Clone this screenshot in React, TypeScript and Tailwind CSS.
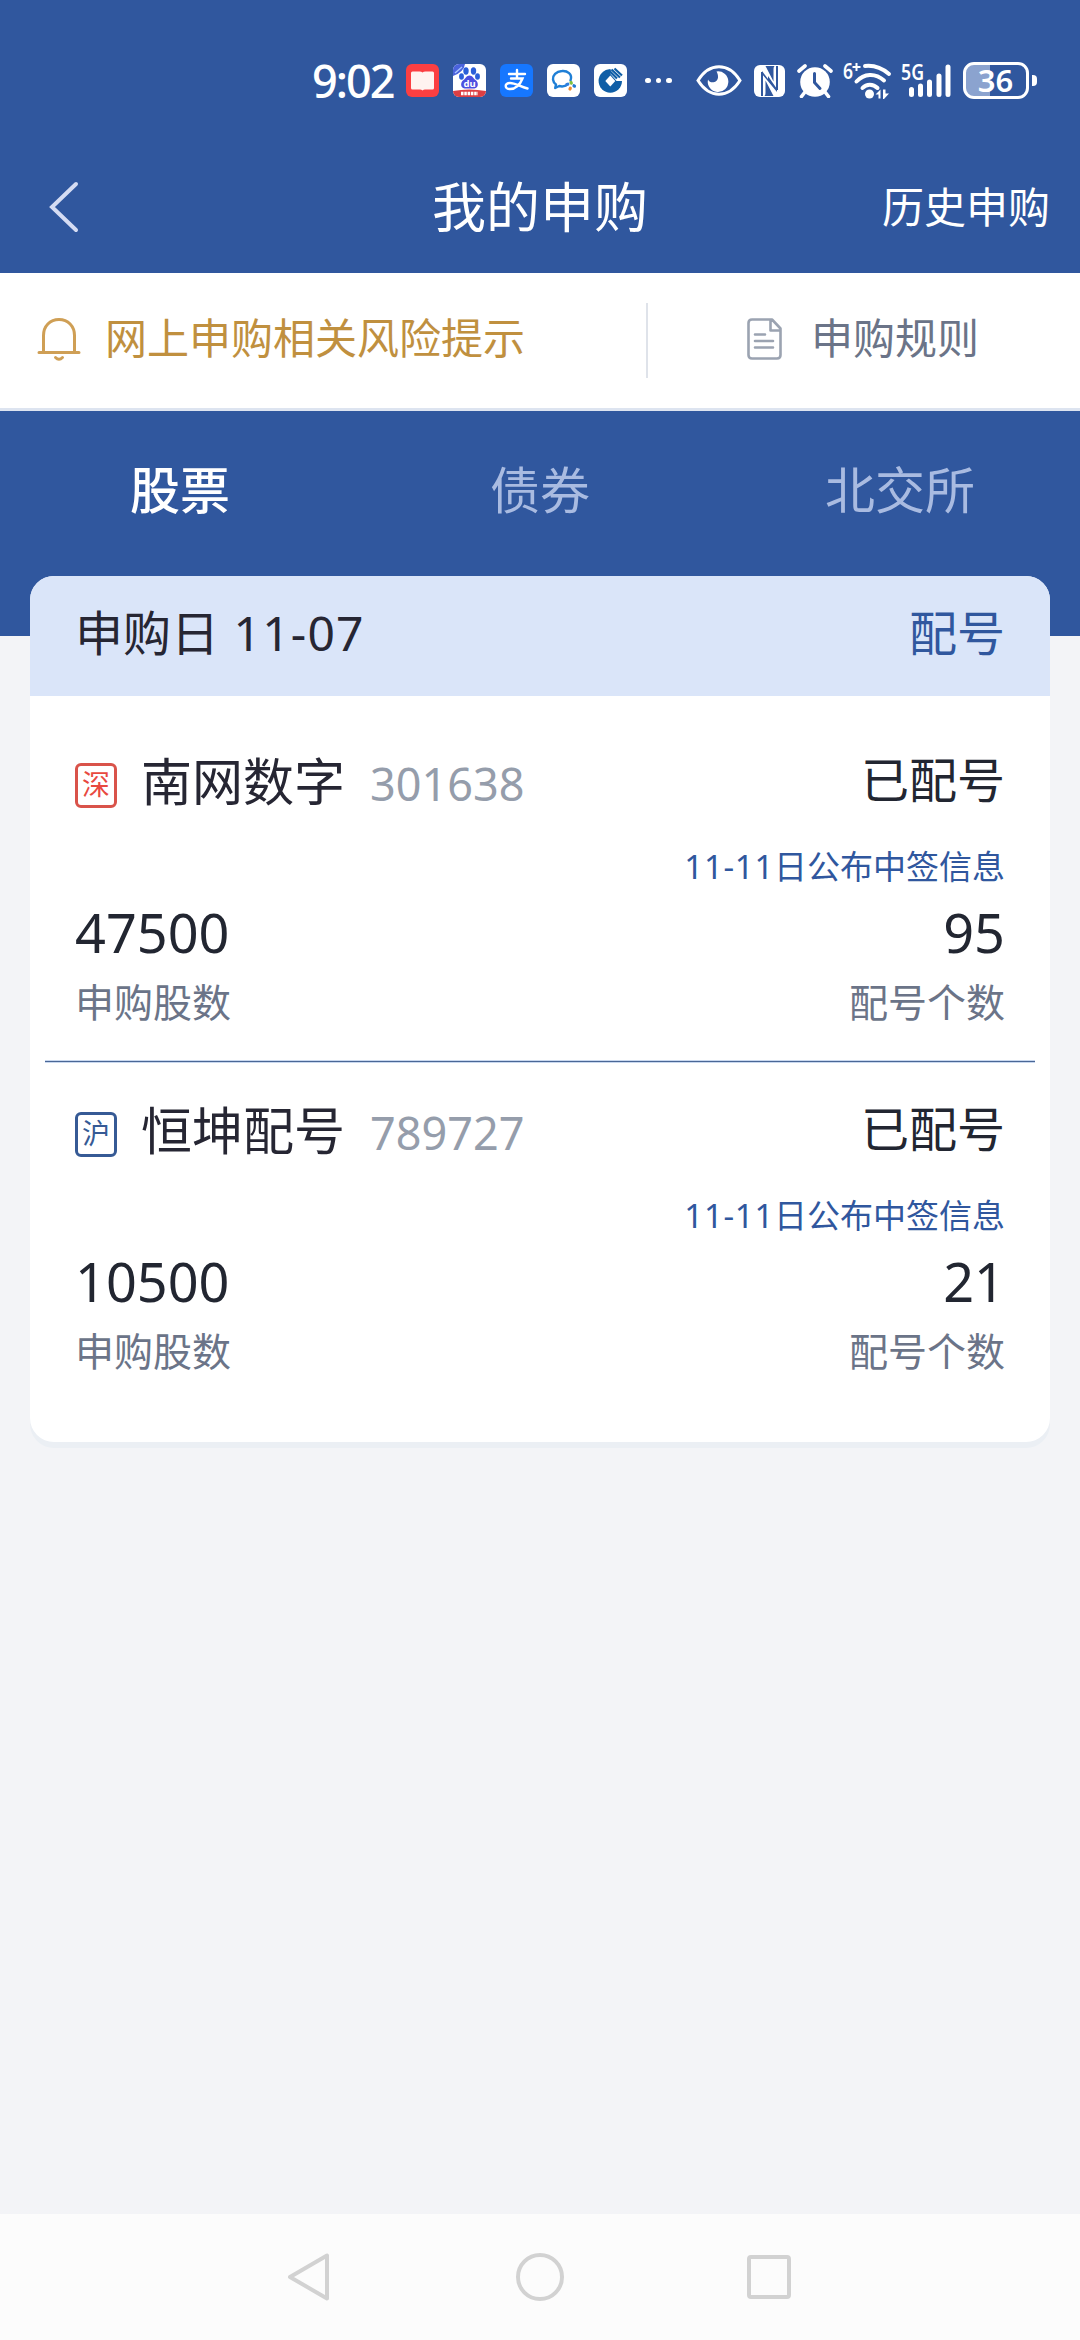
import { useState } from 'react';
import clsx from 'clsx';

type Subscription = {
  market: string;
  name: string;
  code: string;
  shares: string;
  count: string;
  status: string;
  drawDate: string;
};

const tabs = [
  { id: 'stock', label: '股票' },
  { id: 'bond', label: '债券' },
  { id: 'bse', label: '北交所' },
] as const;

const subscriptions: Subscription[] = [
  {
    market: '深',
    name: '南网数字',
    code: '301638',
    shares: '47500',
    count: '95',
    status: '已配号',
    drawDate: '11-11',
  },
  {
    market: '沪',
    name: '恒坤配号',
    code: '789727',
    shares: '10500',
    count: '21',
    status: '已配号',
    drawDate: '11-11',
  },
];

function AppIcons() {
  return (
    <div className="flex gap-[14px]">
      {/* Reader */}
      <svg width="33" height="33" viewBox="0 0 33 33">
        <rect width="33" height="33" rx="6" fill="#fb3f42" />
        <path d="M5 9q0-1.500 1.500-1.500h7q2 0 3 1 1-1 3-1h7q1.500 0 1.500 1.500v15q0 1.500-1.500 1.500h-7.500q-1.500 0-2.500 1-1-1-2.500-1H6.500Q5 25.500 5 24z" fill="#fff3f0" />
      </svg>
      {/* Baidu */}
      <svg width="33" height="33" viewBox="0 0 33 33">
        <defs>
          <clipPath id="baidu">
            <rect width="33" height="33" rx="6" />
          </clipPath>
        </defs>
        <g clipPath="url(#baidu)">
          <rect width="33" height="33" fill="#fff" />
          <path d="M0 0h12q-1 8-12 12z" fill="#4a63dc" />
          <path d="M2 9l7-6" stroke="#a9c4ff" strokeWidth="1.500" />
          <ellipse cx="13" cy="7" rx="2.700" ry="3.700" fill="#2b5fd9" />
          <ellipse cx="20.500" cy="7" rx="2.700" ry="3.700" fill="#2b5fd9" />
          <ellipse cx="8.500" cy="12.500" rx="2.400" ry="3.200" fill="#2b5fd9" />
          <ellipse cx="24.500" cy="12.500" rx="2.400" ry="3.200" fill="#2b5fd9" />
          <path d="M16.500 11.500c3 0 4 3 6 4.500 3.500 2.500 3 8-1 8.500H11.500c-4-.5-4.500-6-1-8.500 2-1.500 3-4.500 6-4.500z" fill="#4d4fe0" />
          <path d="M0 27q16-3 33 0v6H0z" fill="#dc3f43" />
          <text x="16.500" y="22.500" fontSize="9.500" fontWeight="700" fill="#fff" textAnchor="middle">du</text>
          <path d="M8 29.500h17" stroke="#fff" strokeWidth="3.500" strokeDasharray="2.500 .8" />
        </g>
      </svg>
      {/* Alipay */}
      <svg width="33" height="33" viewBox="0 0 33 33">
        <rect width="33" height="33" rx="6" fill="#1677ff" />
        <g fill="none" stroke="#fff" strokeWidth="2.400" strokeLinecap="round">
          <path d="M9 10h16M17 6v8.500M11 14.500h11.500c-2 5-6 10.500-12.500 10.500-5.500 0-6-6 0-6 5.500 0 9.500 3.500 17.500 5.500" />
        </g>
      </svg>
      {/* WeCom */}
      <svg width="33" height="33" viewBox="0 0 33 33">
        <rect width="33" height="33" rx="6" fill="#fff" />
        <path d="M23.500 16.500C26 10 20 6.500 15 7 9 7.300 5.500 11.500 6 15.500c.3 2.500 1.500 4 3 5l-.8 3.500 4-2c2 .6 4.500.5 6.500-.3" fill="none" stroke="#1f7fd6" strokeWidth="2.400" strokeLinecap="round" strokeLinejoin="round" />
        <g strokeWidth="3.200" strokeLinecap="round">
          <path d="M19.800 20.500l1-.3" stroke="#2f7fe0" />
          <path d="M24 18.500l.3.700" stroke="#7fc241" />
          <path d="M27 21.800l.5.300" stroke="#2479d0" />
          <path d="M23 25l.3-.8" stroke="#f08a2b" />
        </g>
      </svg>
      {/* China Construction Bank */}
      <svg width="33" height="33" viewBox="0 0 33 33">
        <rect width="33" height="33" rx="6" fill="#fff" />
        <circle cx="16.300" cy="17" r="11.700" fill="#0f5ea6" />
        <path d="M17 2h14v15h-8.500l-6-7z" fill="#fff" />
        <path d="M14.500 6L23 14.500M17.500 5.500l8.500 8M20.500 4.500l7.500 7" stroke="#0f5ea6" strokeWidth="2.200" />
        <path d="M16.300 11.500l5 5.500-5 5.500-5-5.500z" fill="#fff" />
      </svg>
    </div>
  );
}

function SystemIcons() {
  return (
    <div className="flex items-center text-white">
      {/* Eye comfort */}
      <svg width="46" height="31" viewBox="0 0 46 31" className="mr-[12px]">
        <path d="M2 15.500C8 6 15 1.800 23 1.800S38 6 44 15.500C38 25 31 29.200 23 29.200S8 25 2 15.500z" fill="none" stroke="currentColor" strokeWidth="3" />
        <path d="M20.500 6.500a10.300 10.300 0 1 1-8.500 8c2 4.500 9.500 3.500 10-2 .2-2.500-.5-4.500-1.500-6z" fill="currentColor" />
      </svg>
      {/* NFC */}
      <svg width="31" height="32" viewBox="0 0 31 32" className="mr-[12px]">
        <rect width="31" height="32" rx="6" fill="currentColor" />
        <path d="M8 31V7M23 1v24" stroke="#30579e" strokeWidth="2" />
        <path d="M8 6l6 8v-3l9 13v3L8 9zM11.500 15.500v12.500q0 2-1 3h9zM19.500 16.500V4q0-2 1-3h-9z" fill="#30579e" />
      </svg>
      {/* Alarm */}
      <svg width="36" height="34" viewBox="0 0 36 34" className="mr-[10px]">
        <circle cx="18" cy="18" r="14.800" fill="currentColor" />
        <path d="M2 7L8 2M34 7L28 2M8 28l-3.500 4.500M28 28l3.500 4.500" stroke="currentColor" strokeWidth="3.600" strokeLinecap="round" />
        <path d="M17.500 9.500v9l5.500 6" fill="none" stroke="#30579e" strokeWidth="3" strokeLinecap="round" />
      </svg>
      {/* Wi-Fi 6+ */}
      <svg width="49" height="38" viewBox="0 0 49 38" className="mr-[9px] overflow-visible">
        <text x="0" y="16.500" fontSize="22" fontWeight="600" fill="currentColor" textLength="10" lengthAdjust="spacingAndGlyphs">6</text>
        <path d="M13.500 1v8M9.500 5h8" stroke="currentColor" strokeWidth="2" />
        <g fill="none" stroke="currentColor" strokeWidth="4" strokeLinecap="round">
          <path d="M22 4c9-1 17 2 24 8" />
          <path d="M13.500 19.500c7.500-8 18.500-9 27.500-1" />
          <path d="M19.500 26c4-4.500 10.500-4.500 15 0" />
        </g>
        <circle cx="26.500" cy="32" r="4.500" fill="currentColor" />
        <path d="M32.500 32.500l5-5v9h-2v-4zM40 27.500h2.500v4H46l-5 5.500h-1z" fill="currentColor" />
      </svg>
      {/* 5G signal */}
      <svg width="50" height="37" viewBox="0 0 50 37" className="mr-[12px] overflow-visible">
        <text x="0" y="17.500" fontSize="22" fontWeight="600" fill="currentColor" textLength="23" lengthAdjust="spacingAndGlyphs">5G</text>
        <path d="M10.500 27.500v5M19.500 24v8.500M28.500 20v12.500M38 14v18.500M47 5v27.500" stroke="currentColor" strokeWidth="5" strokeLinecap="round" />
      </svg>
      {/* Battery */}
      <div className="flex h-[37px] w-[66px] items-center justify-center rounded-[11px] border-[3px] border-white bg-linear-to-r from-[#8ba3cf] from-40% to-transparent to-40%">
        <span className="text-[31px] leading-none font-semibold">36</span>
      </div>
      <div className="ml-[3px] h-[11px] w-[5px] rounded-r-[4px] bg-white" />
    </div>
  );
}

function StatusBar() {
  return (
    <div className="flex h-[141px] items-center pt-[20px] pl-[312px]">
      <span className="w-[94px] text-[45px] leading-none font-medium tracking-[-2px] text-white">9:02</span>
      <AppIcons />
      <div className="mr-[24px] ml-[18px] flex gap-[5px]">
        <i className="size-[5.500px] rounded-full bg-white" />
        <i className="size-[5.500px] rounded-full bg-white" />
        <i className="size-[5.500px] rounded-full bg-white" />
      </div>
      <SystemIcons />
    </div>
  );
}

function MarketBadge({ market }: { market: string }) {
  return (
    <span
      className={clsx(
        'mt-[9px] flex h-[45px] w-[42px] justify-center rounded-[6px] border-[3px] text-[28px] leading-[36px]',
        market === '深' ? 'border-[#d9534a] text-[#e8493f]' : 'border-[#365a95] text-[#365a95]'
      )}
    >
      {market}
    </span>
  );
}

function SubscriptionItem({ item }: { item: Subscription }) {
  return (
    <div className="h-[349px] px-[45px] pt-[37px] text-[#222631]">
      <div className="flex h-[66px] items-center">
        <MarketBadge market={item.market} />
        <span className="ml-[24px] text-[51px] leading-[66px] text-[#262633]">{item.name}</span>
        <span className="mt-[5px] ml-[25px] text-[45px] leading-[66px] text-[#959dab]">{item.code}</span>
        <span className="-mt-[2px] ml-auto text-[48px] leading-[66px]">{item.status}</span>
      </div>
      <div className="mt-[31px] text-right text-[33px] leading-[44px] text-[#30579e]">
        <span className="tracking-[0.7px]">{item.drawDate}</span>
        日公布中签信息
      </div>
      <div className="-mt-[1px] flex justify-between text-[54px] leading-[88px]">
        <span>{item.shares}</span>
        <span>{item.count}</span>
      </div>
      <div className="flex justify-between text-[39px] leading-[52px] text-[#6b7488]">
        <span>申购股数</span>
        <span>配号个数</span>
      </div>
    </div>
  );
}

export default function App() {
  const [activeTab, setActiveTab] = useState<'stock' | 'bond' | 'bse'>('stock');

  return (
    <div className="flex h-[2340px] w-[1080px] flex-col overflow-hidden bg-[#f3f4f7] font-['Noto_Sans','Noto_Sans_CJK_SC',sans-serif]">
      {/* Header */}
      <header className="h-[273px] bg-[#30579e] text-white">
        <StatusBar />
        <div className="grid h-[132px] grid-cols-3 items-center pr-[30px] pl-[48px]">
          <svg width="32" height="54" viewBox="0 0 32 54" fill="none" stroke="#d5dcf3" strokeWidth="4" strokeLinecap="round">
            <path d="M28 4L4 27l24 23" />
          </svg>
          <h1 className="-ml-[18px] text-center text-[54px] leading-none">我的申购</h1>
          <span className="text-right text-[42px] leading-none">历史申购</span>
        </div>
      </header>

      {/* Notice */}
      <div className="flex h-[138px] items-center border-b-[3px] border-[#dde4f0] bg-white text-[42px] leading-none">
        <div className="flex w-[646px] items-center pb-[4px] pl-[37px] text-[#c0903f]">
          <svg width="44" height="44" viewBox="0 0 44 44" fill="none" stroke="#cf9f55" strokeWidth="3" strokeLinecap="round">
            <path d="M2 35.500h40M6.500 35V18.500C6.500 9 13 2.500 22 2.500S37.500 9 37.500 18.500V35M18.500 40.500q3.500 3.500 7 0" />
          </svg>
          <span className="mb-[2px] ml-[24px]">网上申购相关风险提示</span>
        </div>
        <div className="h-[75px] w-[2px] bg-[#dfe3ea]" />
        <div className="flex items-center pb-[4px] pl-[99px] text-[#6b7488]">
          <svg width="35" height="42" viewBox="0 0 35 42" fill="none" stroke="#9ba3b1" strokeWidth="2.600" strokeLinecap="round" strokeLinejoin="round">
            <path d="M5 1.500h20l8.500 9V37q0 3.500-3.500 3.500H5Q1.500 40.500 1.500 37V5Q1.500 1.500 5 1.500zM23.500 2v10.500h9.500M8 16.500h10M8 23h18M8 29.500h18" />
          </svg>
          <span className="mb-[2px] ml-[29px]">申购规则</span>
        </div>
      </div>

      {/* Tabs */}
      <nav className="grid h-[225px] shrink-0 grid-cols-3 items-start bg-[#30579e] pt-[34px]">
        {tabs.map((tab) => (
          <button
            key={tab.id}
            onClick={() => setActiveTab(tab.id)}
            className={clsx(
              'h-[90px] text-[50px] leading-[90px]',
              activeTab === tab.id ? 'font-medium text-white' : 'text-[#a9bbe1]'
            )}
          >
            {tab.label}
          </button>
        ))}
      </nav>

      {/* Subscriptions */}
      <main className="mx-[30px] -mt-[60px] h-[866px] overflow-hidden rounded-[24px] bg-white shadow-[0_6px_0_#ebeff4]">
        <div className="flex h-[120px] items-center justify-between bg-[#dae5f9] px-[45px] pb-[6px] text-[48px] leading-none">
          <span className="text-[#262633]">
            申购日 <span className="ml-[2px] tracking-[1.2px]">11-07</span>
          </span>
          <span className="text-[#30579e]">配号</span>
        </div>
        <div className="pt-[15px]">
          {subscriptions.map((item, i) => (
            <div key={item.code}>
              {i > 0 && <div className="mx-[15px] -mb-[3px] h-[3px] border-y border-[#c9d8ef] bg-[#4a6796]" />}
              <SubscriptionItem item={item} />
            </div>
          ))}
        </div>
      </main>

      {/* System navigation */}
      <footer className="mt-auto flex h-[126px] items-center bg-[#fcfcfc] pl-[287px]">
        <svg width="44" height="50" viewBox="0 0 44 50" fill="none" stroke="#d2d2d2" strokeWidth="4" strokeLinejoin="round">
          <path d="M3 25L40 3.500v43z" />
        </svg>
        <div className="ml-[185px] size-[48px] rounded-full border-4 border-[#d2d2d2]" />
        <div className="ml-[183px] size-[44px] rounded-[4px] border-4 border-[#d2d2d2]" />
      </footer>
    </div>
  );
}
